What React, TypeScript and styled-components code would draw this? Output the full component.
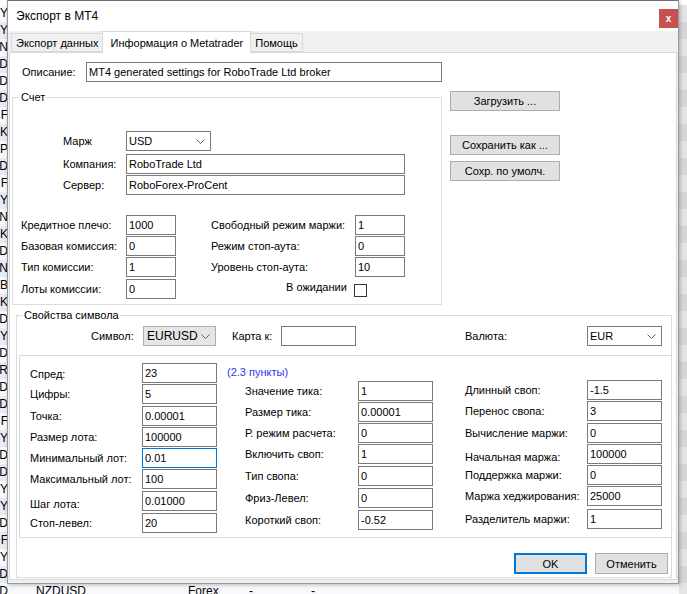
import React from 'react';
import styled, { createGlobalStyle } from 'styled-components';

const GlobalStyle = createGlobalStyle`
  html, body {
    margin: 0;
    padding: 0;
  }
  body {
    width: 687px;
    height: 594px;
    overflow: hidden;
    font-family: "Liberation Sans", Arial, sans-serif;
    font-size: 11px;
    color: #000;
    background: #fff;
  }
`;

/* ---------- background terminal list ---------- */

const Desktop = styled.div`
  position: relative;
  width: 687px;
  height: 594px;
  overflow: hidden;
`;

const MarketList = styled.div`
  padding-top: 5px;
  font-size: 12px;
`;

const MarketRow = styled.div<{ $odd: boolean }>`
  display: flex;
  height: 17px;
  line-height: 17px;
  background: ${(p) => (p.$odd ? '#e6ecf6' : '#f7f9fc')};
`;

const TailCell = styled.div`
  width: 8px;
  display: flex;
  justify-content: flex-end;
  white-space: nowrap;
`;

const MarketCell = styled.div<{ $w: number }>`
  width: ${(p) => p.$w}px;
  white-space: nowrap;
`;

const StripeCell = styled.div<{ $odd: boolean }>`
  margin-left: auto;
  width: 8px;
  background: ${(p) => (p.$odd ? '#d6d6d6' : '#e4e4e4')};
`;

/* ---------- dialog ---------- */

const Dialog = styled.div`
  position: absolute;
  left: 7px;
  top: 0;
  width: 672px;
  height: 584px;
  box-sizing: border-box;
  border: 1px solid #9a9a9a;
  border-top-color: #6e6e6e;
  background: #f0f0f0;
  box-shadow: 1px 1px 4px rgba(0, 0, 0, 0.25);
  display: flex;
  flex-direction: column;
`;

const TitleBar = styled.div`
  height: 30px;
  flex-shrink: 0;
  background: #fff;
  display: flex;
  align-items: center;
  padding-left: 8px;
  font-size: 12px;
`;

const CloseButton = styled.div`
  margin-left: auto;
  margin-top: 5px;
  width: 19px;
  height: 19px;
  background: #c75050;
  color: #fff;
  font-weight: bold;
  font-size: 10px;
  display: flex;
  align-items: center;
  justify-content: center;
`;

const TabStrip = styled.div`
  display: flex;
  align-items: flex-end;
  height: 21px;
  padding-left: 3px;
  position: relative;
  z-index: 1;
  font-size: 11px;
`;

const Tab = styled.div<{ $active?: boolean }>`
  height: ${(p) => (p.$active ? 22 : 19)}px;
  box-sizing: border-box;
  padding: 0 ${(p) => (p.$active ? 7 : 4)}px;
  margin-bottom: ${(p) => (p.$active ? -1 : 0)}px;
  border: 1px solid #d9d9d9;
  border-bottom: ${(p) => (p.$active ? 'none' : '1px solid #d9d9d9')};
  margin-left: ${(p) => (p.$active ? -1 : 0)}px;
  margin-right: ${(p) => (p.$active ? -1 : 0)}px;
  background: ${(p) => (p.$active ? '#fff' : '#f0f0f0')};
  display: flex;
  align-items: center;
  white-space: nowrap;
  z-index: ${(p) => (p.$active ? 2 : 1)};
`;

const TabPage = styled.div`
  margin: 0 1px 3px 1px;
  flex: 1;
  background: #fff;
  border: 1px solid #d9d9d9;
  display: flex;
  flex-direction: column;
`;

/* ---------- form parts ---------- */

const Row = styled.div<{ $top?: number; $left?: number; $gap?: number }>`
  display: flex;
  align-items: flex-start;
  margin-top: ${(p) => p.$top ?? 0}px;
  padding-left: ${(p) => p.$left ?? 0}px;
  gap: ${(p) => p.$gap ?? 0}px;
`;

const Column = styled.div<{ $top?: number; $left?: number }>`
  display: flex;
  flex-direction: column;
  margin-top: ${(p) => p.$top ?? 0}px;
  padding-left: ${(p) => p.$left ?? 0}px;
`;

const Label = styled.div<{ $w: number; $shift?: number; $ml?: number }>`
  width: ${(p) => p.$w}px;
  flex-shrink: 0;
  height: 20px;
  line-height: 20px;
  margin-left: ${(p) => p.$ml ?? 0}px;
  white-space: nowrap;
  transform: translateY(${(p) => p.$shift ?? 0}px);
`;

const TextBox = styled.input<{ $w: number; $focus?: boolean }>`
  width: ${(p) => p.$w}px;
  flex-shrink: 0;
  height: 20px;
  box-sizing: border-box;
  margin: 0;
  padding: 0 2px;
  border: 1px solid ${(p) => (p.$focus ? '#0078d7' : '#7a7a7a')};
  background: #fff;
  font-family: "Liberation Sans", Arial, sans-serif;
  font-size: 11px;
  color: #000;
  outline: none;
`;

const Combo = styled.div<{ $w: number; $flat?: boolean }>`
  width: ${(p) => p.$w}px;
  height: 20px;
  box-sizing: border-box;
  border: 1px solid ${(p) => (p.$flat ? '#adadad' : '#7a7a7a')};
  background: ${(p) => (p.$flat ? '#e5e5e5' : '#fff')};
  display: flex;
  align-items: center;
  padding: 0 5px 0 ${(p) => (p.$flat ? 3 : 2)}px;
  font-size: ${(p) => (p.$flat ? 12 : 11)}px;
  svg {
    margin-left: auto;
  }
`;

const Button = styled.div<{ $w: number; $h?: number; $default?: boolean }>`
  width: ${(p) => p.$w}px;
  height: ${(p) => p.$h ?? 20}px;
  box-sizing: border-box;
  border: ${(p) => (p.$default ? '2px solid #0078d7' : '1px solid #adadad')};
  background: #e1e1e1;
  display: flex;
  align-items: center;
  justify-content: center;
  white-space: nowrap;
`;

const GroupBox = styled.div<{ $w: number; $h?: number; $left?: number; $top?: number }>`
  position: relative;
  width: ${(p) => p.$w}px;
  ${(p) => (p.$h ? `height: ${p.$h}px;` : '')}
  box-sizing: border-box;
  margin-left: ${(p) => p.$left ?? 0}px;
  margin-top: ${(p) => p.$top ?? 0}px;
  border: 1px solid #dcdcdc;
  display: flex;
  flex-direction: column;
`;

const Caption = styled.span<{ $x: number }>`
  position: absolute;
  top: -7px;
  left: ${(p) => p.$x}px;
  padding: 0 1px;
  line-height: 13px;
  background: #fff;
`;

const InnerBox = styled.div`
  margin: 9px 0 0 2px;
  border: 1px solid #dcdcdc;
  border-right: none;
  display: flex;
  padding: 0 0 4px 10px;
`;

const Stack = styled.div<{ $top: number; $w: number; $ml: number }>`
  display: flex;
  flex-direction: column;
  width: ${(p) => p.$w}px;
  flex-shrink: 0;
  margin-top: ${(p) => p.$top}px;
  margin-left: ${(p) => p.$ml}px;
`;

const FieldRow = styled.div<{ $gap: number }>`
  display: flex;
  margin-top: ${(p) => p.$gap}px;
`;

const Hint = styled.div`
  margin-left: 10px;
  line-height: 18px;
  color: #3333ee;
  white-space: nowrap;
`;

const CheckBox = styled.div`
  width: 13px;
  height: 13px;
  flex-shrink: 0;
  box-sizing: border-box;
  border: 1px solid #333;
  background: #fff;
  margin-top: 3px;
`;

const DialogButtons = styled.div`
  display: flex;
  justify-content: flex-end;
  gap: 8px;
  margin-top: 15px;
  padding: 0 3px 3px 0;
`;

const Chevron = () => (
  <svg width="9" height="5" viewBox="0 0 9 5">
    <path d="M0.5 0.5 L4.5 4.5 L8.5 0.5" fill="none" stroke="#606060" strokeWidth="1" />
  </svg>
);

type FieldDef = {
  label: string;
  value: string;
  gap?: number;
  shift?: number;
  focus?: boolean;
  hint?: string;
};

type FieldStackProps = {
  fields: FieldDef[];
  labelW: number;
  inputW: number;
  top: number;
  left?: number;
};

const FieldStack = ({ fields, labelW, inputW, top, left = 0 }: FieldStackProps) => (
  <Stack $top={top} $w={labelW + inputW} $ml={left}>
    {fields.map((f, i) => (
      <FieldRow key={f.label} $gap={i === 0 ? 0 : f.gap ?? 1}>
        <Label $w={labelW} $shift={f.shift}>
          {f.label}
        </Label>
        <TextBox $w={inputW} $focus={f.focus} defaultValue={f.value} />
        {f.hint && <Hint>{f.hint}</Hint>}
      </FieldRow>
    ))}
  </Stack>
);

/* ---------- data ---------- */

const listTails = [
  'Y', 'Y', 'N', 'D', 'D', 'D', 'F', 'K', 'P', 'D', 'F', 'Y', 'N', 'K', 'D', 'N',
  'B', 'K', 'D', 'Y', 'D', 'R', 'D', 'D', 'F', 'Y', 'D', 'D', 'Y', 'Y', 'D', 'F',
  'Y', 'D', 'D',
];

const leftAccount: FieldDef[] = [
  { label: 'Кредитное плечо:', value: '1000' },
  { label: 'Базовая комиссия:', value: '0' },
  { label: 'Тип комиссии:', value: '1' },
  { label: 'Лоты комиссии:', value: '0', gap: 2 },
];

const rightAccount: FieldDef[] = [
  { label: 'Свободный режим маржи:', value: '1' },
  { label: 'Режим стоп-аута:', value: '0' },
  { label: 'Уровень стоп-аута:', value: '10' },
];

const symbolCol1: FieldDef[] = [
  { label: 'Спред:', value: '23', shift: 1, hint: '(2.3 пункты)' },
  { label: 'Цифры:', value: '5' },
  { label: 'Точка:', value: '0.00001', gap: 2 },
  { label: 'Размер лота:', value: '100000' },
  { label: 'Минимальный лот:', value: '0.01', focus: true },
  { label: 'Максимальный лот:', value: '100' },
  { label: 'Шаг лота:', value: '0.01000', gap: 2, shift: 3 },
  { label: 'Стоп-левел:', value: '20', gap: 2 },
];

const symbolCol2: FieldDef[] = [
  { label: 'Значение тика:', value: '1' },
  { label: 'Размер тика:', value: '0.00001' },
  { label: 'Р. режим расчета:', value: '0' },
  { label: 'Включить своп:', value: '1' },
  { label: 'Тип свопа:', value: '0', gap: 2 },
  { label: 'Фриз-Левел:', value: '0', gap: 2 },
  { label: 'Короткий своп:', value: '-0.52', gap: 2 },
];

const symbolCol3: FieldDef[] = [
  { label: 'Длинный своп:', value: '-1.5' },
  { label: 'Перенос свопа:', value: '3' },
  { label: 'Вычисление маржи:', value: '0', gap: 2 },
  { label: 'Начальная маржа:', value: '100000', shift: 3 },
  { label: 'Поддержка маржи:', value: '0' },
  { label: 'Маржа хеджирования:', value: '25000' },
  { label: 'Разделитель маржи:', value: '1', gap: 3 },
];

/* ---------- page ---------- */

const App = () => {
  const last = listTails.length - 1;
  return (
    <>
      <GlobalStyle />
      <Desktop>
        <MarketList>
          {listTails.map((t, i) => (
            <MarketRow key={`row-${i}`} $odd={i % 2 === 1}>
              <TailCell>{t}</TailCell>
              <MarketCell $w={28} />
              <MarketCell $w={152}>{i === last ? 'NZDUSD' : ''}</MarketCell>
              <MarketCell $w={61}>{i === last ? 'Forex' : ''}</MarketCell>
              <MarketCell $w={62}>{i === last ? '-' : ''}</MarketCell>
              <MarketCell $w={40}>{i === last ? '-' : ''}</MarketCell>
              <StripeCell $odd={i % 2 === 1} />
            </MarketRow>
          ))}
        </MarketList>

        <Dialog>
          <TitleBar>
            Экспорт в МТ4
            <CloseButton>x</CloseButton>
          </TitleBar>
          <TabStrip>
            <Tab>Экспорт данных</Tab>
            <Tab $active>Информация о Metatrader</Tab>
            <Tab>Помощь</Tab>
          </TabStrip>
          <TabPage>
            <Row $top={9} $left={12}>
              <Label $w={64}>Описание:</Label>
              <TextBox $w={356} defaultValue="MT4 generated settings for RoboTrade Ltd broker" />
            </Row>

            <Row $top={9}>
              <GroupBox $w={430} $h={208} $left={2} $top={6}>
                <Caption $x={7}>Счет</Caption>
                <Column $top={33} $left={50}>
                  <Row>
                    <Label $w={63}>Марж</Label>
                    <Combo $w={85}>
                      USD
                      <Chevron />
                    </Combo>
                  </Row>
                  <Row $top={3}>
                    <Label $w={63}>Компания:</Label>
                    <TextBox $w={279} defaultValue="RoboTrade Ltd" />
                  </Row>
                  <Row $top={1}>
                    <Label $w={63}>Сервер:</Label>
                    <TextBox $w={279} defaultValue="RoboForex-ProCent" />
                  </Row>
                </Column>
                <Row $top={20} $left={8} $gap={35}>
                  <FieldStack fields={leftAccount} labelW={105} inputW={50} top={0} />
                  <Column>
                    <FieldStack fields={rightAccount} labelW={144} inputW={50} top={0} />
                    <Row $top={4} $left={75} $gap={8}>
                      <Label $w={60} $shift={-4}>
                        В ожидании
                      </Label>
                      <CheckBox />
                    </Row>
                  </Column>
                </Row>
              </GroupBox>

              <Column $left={8}>
                <Button $w={110}>Загрузить ...</Button>
                <Row $top={24}>
                  <Button $w={110}>Сохранить как ...</Button>
                </Row>
                <Row $top={6}>
                  <Button $w={110}>Сохр. по умолч.</Button>
                </Row>
              </Column>
            </Row>

            <GroupBox $w={656} $left={6} $top={10}>
              <Caption $x={6}>Свойства символа</Caption>
              <Row $top={10} $left={74}>
                <Label $w={52}>Символ:</Label>
                <Combo $w={73} $flat>
                  EURUSD
                  <Chevron />
                </Combo>
                <Label $w={49} $ml={16}>
                  Карта к:
                </Label>
                <TextBox $w={75} defaultValue="" />
                <Label $w={122} $ml={109}>
                  Валюта:
                </Label>
                <Combo $w={75}>
                  EUR
                  <Chevron />
                </Combo>
              </Row>

              <InnerBox>
                <FieldStack fields={symbolCol1} labelW={112} inputW={75} top={7} />
                <FieldStack fields={symbolCol2} labelW={113} inputW={75} top={25} left={28} />
                <FieldStack fields={symbolCol3} labelW={122} inputW={75} top={24} left={32} />
              </InnerBox>

              <DialogButtons>
                <Button $w={73} $h={21} $default>
                  OK
                </Button>
                <Button $w={73} $h={21}>
                  Отменить
                </Button>
              </DialogButtons>
            </GroupBox>
          </TabPage>
        </Dialog>
      </Desktop>
    </>
  );
};

export default App;
